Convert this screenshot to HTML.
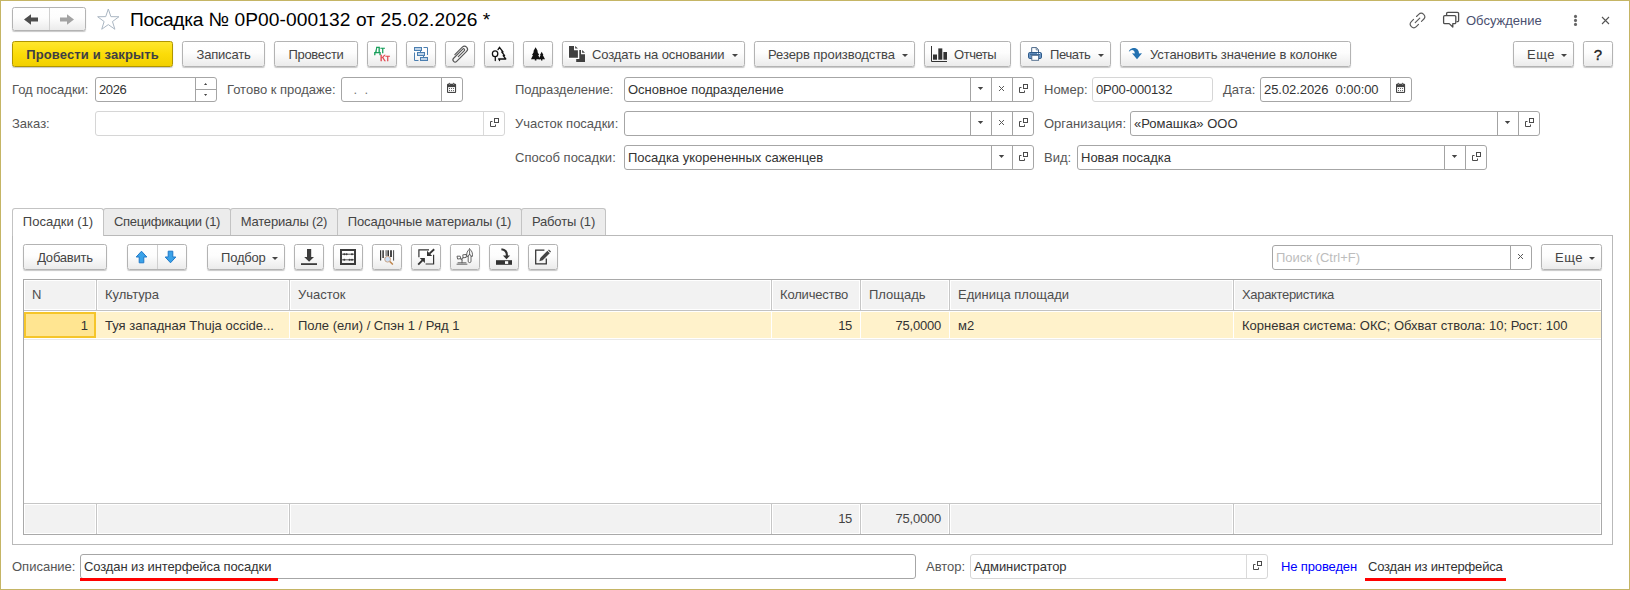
<!DOCTYPE html>
<html lang="ru">
<head>
<meta charset="utf-8">
<title>Посадка № 0P00-000132 от 25.02.2026 *</title>
<style>
*{box-sizing:border-box;margin:0;padding:0}
html,body{width:1630px;height:590px;overflow:hidden;background:#fff}
body{font-family:"Liberation Sans",sans-serif;font-size:13px;color:#333;position:relative}
#win{position:absolute;left:0;top:0;width:1630px;height:590px;background:#fff}
#frame{position:absolute;left:0;top:0;width:1630px;height:590px;border:1px solid #c5b565;z-index:50;pointer-events:none}
.a{position:absolute;white-space:nowrap}
.btn{position:absolute;height:26px;border:1px solid #b3b3b3;border-radius:2.5px;background:linear-gradient(#ffffff 0%,#fdfdfd 45%,#ebebeb 100%);box-shadow:0 1px 1px rgba(0,0,0,.22);color:#444;font-size:13px;line-height:24px;padding-top:1px;text-align:center;white-space:nowrap}
.btn.y{background:linear-gradient(#ffe72e 0%,#fbdc09 50%,#f2d000 100%);border-color:#b09600;font-weight:bold;color:#3e3e44}
.lbl{position:absolute;font-size:13px;line-height:24px;height:24px;color:#555;white-space:nowrap}
.inp{position:absolute;height:25px;border:1px solid #a6a6a6;border-radius:3px;background:#fff;font-size:13px;line-height:23px;color:#333;white-space:nowrap;overflow:hidden;padding-left:3px}
.inp.ro{border-color:#d6d6d6}
.ib{position:absolute;top:0;bottom:0;width:21px;border-left:1px solid #a3a3a3}
.ro .ib{border-left-color:#dadada}
.ib svg{position:absolute;left:0;top:0}
.tab{position:absolute;top:208px;height:27px;border:1px solid #c3c3c3;border-bottom:none;border-radius:3px 3px 0 0;background:#ececec;font-size:13px;line-height:25px;color:#444;text-align:center;white-space:nowrap}
.tab.on{background:#fff;height:28px;z-index:2}
.hc{position:absolute;top:0;height:30px;font-size:13px;line-height:30px;color:#4d4d4d;padding-left:8px;background:#f2f2f2;box-shadow:inset 0 0 0 1px #fff;border-right:1px solid #c6c6c6;white-space:nowrap}
.rc{position:absolute;top:0;height:26px;font-size:13px;line-height:26px;padding-top:1px;color:#333;padding-left:8px;border-right:1px solid #fff;white-space:nowrap;overflow:hidden}
.rc.sel{border:2px solid #f5c52a;background:#ffe591;line-height:22px;padding-top:1px;padding-right:6px}
.fc{position:absolute;top:0;height:30px;font-size:13px;line-height:30px;color:#444;background:#f2f2f2;box-shadow:inset 0 0 0 1px #fff;border-right:1px solid #c6c6c6;white-space:nowrap}
.r{text-align:right;padding-right:8px;padding-left:0}
svg{display:block}
</style>
</head>
<body>
<div id="win">

<!-- header -->
<div id="hdr">
<div class="btn" style="left:12px;top:7px;width:74px;height:24px"></div>
<div class="a" style="left:49px;top:8px;width:1px;height:22px;background:#d0d0d0"></div>



<div class="a" style="left:130px;top:8px;font-size:19.2px;line-height:24px;color:#000"><span style="letter-spacing:-0.35px">Посадка</span><span style="letter-spacing:0.08px"> № 0P00-000132 от 25.02.2026 *</span></div>


<div class="a" style="left:1466px;top:9px;font-size:13px;line-height:24px;color:#4a5070">Обсуждение</div>


</div>

<!-- toolbar -->
<div id="tb">
<div class="btn y" style="left:12px;top:41px;width:161px;letter-spacing:0.13px">Провести и закрыть</div>
<div class="btn" style="left:182px;top:41px;width:83px;letter-spacing:-0.2px">Записать</div>
<div class="btn" style="left:274px;top:41px;width:84px;letter-spacing:-0.3px">Провести</div>
<div class="btn" style="left:367px;top:41px;width:30px"></div>
<div class="btn" style="left:406px;top:41px;width:30px"></div>
<div class="btn" style="left:445px;top:41px;width:30px"></div>
<div class="btn" style="left:484px;top:41px;width:30px"></div>
<div class="btn" style="left:523px;top:41px;width:30px"></div>
<div class="btn" style="left:562px;top:41px;width:183px;text-align:left;padding-left:29px;letter-spacing:-0.12px">Создать на основании</div>
<div class="btn" style="left:754px;top:41px;width:161px;text-align:left;padding-left:13px;letter-spacing:-0.07px">Резерв производства</div>
<div class="btn" style="left:924px;top:41px;width:87px;text-align:left;padding-left:29px;letter-spacing:-0.45px">Отчеты</div>
<div class="btn" style="left:1020px;top:41px;width:91px;text-align:left;padding-left:29px;letter-spacing:-0.35px">Печать</div>
<div class="btn" style="left:1120px;top:41px;width:231px;text-align:left;padding-left:29px;letter-spacing:-0.09px">Установить значение в колонке</div>
<div class="btn" style="left:1513px;top:41px;width:61px;text-align:left;padding-left:13px;letter-spacing:0.5px">Еще</div>
<div class="btn" style="left:1583px;top:41px;width:30px;font-size:15px;color:#222;-webkit-text-stroke:0.35px #222">?</div>
</div>

<!-- fields -->
<div id="fld">
<div class="lbl" style="left:12px;top:78px">Год посадки:</div>
<div class="inp" style="left:95px;top:77px;width:122px;letter-spacing:-0.4px">2026<div class="ib" style="left:99px"><div class="a" style="left:0;top:11px;width:20px;height:1px;background:#a3a3a3"></div><svg width="20" height="23" viewBox="0 0 20 23"><path d="M8,7.1 H11.2 L9.6,5 Z M8,16.1 H11.2 L9.6,18.1 Z" fill="#444"/></svg></div></div>
<div class="lbl" style="left:227px;top:78px">Готово к продаже:</div>
<div class="inp" style="left:341px;top:77px;width:122px;padding-left:8px;color:#777">&nbsp;.&nbsp;&nbsp;.<div class="ib" style="left:99px"><svg width="20" height="23" viewBox="0 0 20 23"><rect x="5" y="5.8" width="9.1" height="9.1" rx="1" fill="#444"/><rect x="6.1" y="9.1" width="6.9" height="4.8" fill="#fff"/><path d="M7.4,5.5 V7 M11.6,5.5 V7" stroke="#444" stroke-width="1.5" stroke-linecap="round"/><path d="M7.4,5.7 V6.6 M11.6,5.7 V6.6" stroke="#fff" stroke-width="0.6"/><g fill="#444"><circle cx="7.5" cy="10.5" r="0.55"/><circle cx="9.55" cy="10.5" r="0.55"/><circle cx="11.6" cy="10.5" r="0.55"/><circle cx="7.5" cy="12.6" r="0.55"/><circle cx="9.55" cy="12.6" r="0.55"/><circle cx="11.6" cy="12.6" r="0.55"/></g></svg></div></div>
<div class="lbl" style="left:515px;top:78px">Подразделение:</div>
<div class="inp" style="left:624px;top:77px;width:410px">Основное подразделение<div class="ib" style="left:345px"><svg width="20" height="23" viewBox="0 0 20 23"><path d="M6.8,9 h5.4 l-2.7,3.1 z" fill="#444"/></svg></div><div class="ib" style="left:366px"><svg width="20" height="23" viewBox="0 0 20 23"><path d="M7,8 l5,5 m0,-5 l-5,5" stroke="#5a5a5a" stroke-width="1" fill="none"/></svg></div><div class="ib" style="left:387px"><svg width="20" height="23" viewBox="0 0 20 23" fill="none" stroke="#4a4a4a" stroke-width="1"><rect x="10.5" y="6.5" width="4" height="4"/><path d="M8.5,9.5 H6.5 V14.5 H11.5 V12.5"/></svg></div></div>
<div class="lbl" style="left:1044px;top:78px">Номер:</div>
<div class="inp ro" style="left:1092px;top:77px;width:121px;letter-spacing:-0.17px">0P00-000132</div>
<div class="lbl" style="left:1223px;top:78px">Дата:</div>
<div class="inp" style="left:1260px;top:77px;width:152px;letter-spacing:-0.06px">25.02.2026&nbsp; 0:00:00<div class="ib" style="left:129px"><svg width="20" height="23" viewBox="0 0 20 23"><rect x="5" y="5.8" width="9.1" height="9.1" rx="1" fill="#444"/><rect x="6.1" y="9.1" width="6.9" height="4.8" fill="#fff"/><path d="M7.4,5.5 V7 M11.6,5.5 V7" stroke="#444" stroke-width="1.5" stroke-linecap="round"/><path d="M7.4,5.7 V6.6 M11.6,5.7 V6.6" stroke="#fff" stroke-width="0.6"/><g fill="#444"><circle cx="7.5" cy="10.5" r="0.55"/><circle cx="9.55" cy="10.5" r="0.55"/><circle cx="11.6" cy="10.5" r="0.55"/><circle cx="7.5" cy="12.6" r="0.55"/><circle cx="9.55" cy="12.6" r="0.55"/><circle cx="11.6" cy="12.6" r="0.55"/></g></svg></div></div>

<div class="lbl" style="left:12px;top:112px">Заказ:</div>
<div class="inp ro" style="left:95px;top:111px;width:410px"><div class="ib" style="left:387px"><svg width="20" height="23" viewBox="0 0 20 23" fill="none" stroke="#4a4a4a" stroke-width="1"><rect x="10.5" y="6.5" width="4" height="4"/><path d="M8.5,9.5 H6.5 V14.5 H11.5 V12.5"/></svg></div></div>
<div class="lbl" style="left:515px;top:112px">Участок посадки:</div>
<div class="inp" style="left:624px;top:111px;width:410px"><div class="ib" style="left:345px"><svg width="20" height="23" viewBox="0 0 20 23"><path d="M6.8,9 h5.4 l-2.7,3.1 z" fill="#444"/></svg></div><div class="ib" style="left:366px"><svg width="20" height="23" viewBox="0 0 20 23"><path d="M7,8 l5,5 m0,-5 l-5,5" stroke="#5a5a5a" stroke-width="1" fill="none"/></svg></div><div class="ib" style="left:387px"><svg width="20" height="23" viewBox="0 0 20 23" fill="none" stroke="#4a4a4a" stroke-width="1"><rect x="10.5" y="6.5" width="4" height="4"/><path d="M8.5,9.5 H6.5 V14.5 H11.5 V12.5"/></svg></div></div>
<div class="lbl" style="left:1044px;top:112px">Организация:</div>
<div class="inp" style="left:1130px;top:111px;width:410px">«Ромашка» ООО<div class="ib" style="left:366px"><svg width="20" height="23" viewBox="0 0 20 23"><path d="M6.8,9 h5.4 l-2.7,3.1 z" fill="#444"/></svg></div><div class="ib" style="left:387px"><svg width="20" height="23" viewBox="0 0 20 23" fill="none" stroke="#4a4a4a" stroke-width="1"><rect x="10.5" y="6.5" width="4" height="4"/><path d="M8.5,9.5 H6.5 V14.5 H11.5 V12.5"/></svg></div></div>

<div class="lbl" style="left:515px;top:146px">Способ посадки:</div>
<div class="inp" style="left:624px;top:145px;width:410px">Посадка укорененных саженцев<div class="ib" style="left:366px"><svg width="20" height="23" viewBox="0 0 20 23"><path d="M6.8,9 h5.4 l-2.7,3.1 z" fill="#444"/></svg></div><div class="ib" style="left:387px"><svg width="20" height="23" viewBox="0 0 20 23" fill="none" stroke="#4a4a4a" stroke-width="1"><rect x="10.5" y="6.5" width="4" height="4"/><path d="M8.5,9.5 H6.5 V14.5 H11.5 V12.5"/></svg></div></div>
<div class="lbl" style="left:1044px;top:146px">Вид:</div>
<div class="inp" style="left:1077px;top:145px;width:410px">Новая посадка<div class="ib" style="left:366px"><svg width="20" height="23" viewBox="0 0 20 23"><path d="M6.8,9 h5.4 l-2.7,3.1 z" fill="#444"/></svg></div><div class="ib" style="left:387px"><svg width="20" height="23" viewBox="0 0 20 23" fill="none" stroke="#4a4a4a" stroke-width="1"><rect x="10.5" y="6.5" width="4" height="4"/><path d="M8.5,9.5 H6.5 V14.5 H11.5 V12.5"/></svg></div></div>
</div>

<!-- tabs + panel -->
<div id="tabs">
<div class="tab on" style="left:12px;width:92px">Посадки (1)</div>
<div class="tab" style="left:103px;width:128px;letter-spacing:-0.3px">Спецификации (1)</div>
<div class="tab" style="left:230px;width:108px;letter-spacing:-0.2px">Материалы (2)</div>
<div class="tab" style="left:337px;width:185px;letter-spacing:-0.1px">Посадочные материалы (1)</div>
<div class="tab" style="left:521px;width:85px;letter-spacing:-0.15px">Работы (1)</div>
<div class="a" style="left:12px;top:235px;width:1601px;height:310px;border:1px solid #b9b9b9;background:#fff"></div>

<div class="btn" style="left:23px;top:244px;width:84px;letter-spacing:-0.22px">Добавить</div>
<div class="btn" style="left:127px;top:244px;width:60px"></div>
<div class="a" style="left:157px;top:245px;width:1px;height:24px;background:#cfcfcf"></div>


<div class="btn" style="left:207px;top:244px;width:78px;text-align:left;padding-left:13px;letter-spacing:-0.2px">Подбор</div>
<div class="btn" style="left:294px;top:244px;width:30px"></div>
<div class="btn" style="left:333px;top:244px;width:30px"></div>
<div class="btn" style="left:372px;top:244px;width:30px"></div>
<div class="btn" style="left:411px;top:244px;width:30px"></div>
<div class="btn" style="left:450px;top:244px;width:30px"></div>
<div class="btn" style="left:489px;top:244px;width:30px"></div>
<div class="btn" style="left:528px;top:244px;width:30px"></div>
<div class="inp" style="left:1272px;top:245px;width:260px;color:#bdbdbd">Поиск (Ctrl+F)<div class="ib" style="left:237px"><svg width="20" height="23" viewBox="0 0 20 23"><path d="M7,8 l5,5 m0,-5 l-5,5" stroke="#5a5a5a" stroke-width="1" fill="none"/></svg></div></div>
<div class="btn" style="left:1541px;top:244px;width:61px;text-align:left;padding-left:13px;letter-spacing:0.5px">Еще</div>

<div class="a" id="tbl" style="left:23px;top:279px;width:1579px;height:256px;border:1px solid #a9a9a9;background:#fff;overflow:hidden">
 <div class="a" style="left:0;top:0;width:1577px;height:31px;border-bottom:1px solid #c2c2c2"><div class="hc" style="left:0px;width:73px">N</div><div class="hc" style="left:73px;width:193px">Культура</div><div class="hc" style="left:266px;width:482px">Участок</div><div class="hc" style="left:748px;width:89px;letter-spacing:-0.17px">Количество</div><div class="hc" style="left:837px;width:89px">Площадь</div><div class="hc" style="left:926px;width:284px">Единица площади</div><div class="hc" style="left:1210px;width:367px;border-right:none;letter-spacing:-0.33px">Характеристика</div></div>
 <div class="a" style="left:0;top:32px;width:1577px;height:26px;background:#fff2cb"><div class="rc r sel" style="left:0px;width:72px">1</div><div class="rc" style="left:73px;width:193px">Туя западная Thuja occide...</div><div class="rc" style="left:266px;width:482px">Поле (ели) / Спэн 1 / Ряд 1</div><div class="rc r" style="left:748px;width:89px;letter-spacing:-0.3px">15</div><div class="rc r" style="left:837px;width:89px;letter-spacing:-0.2px">75,0000</div><div class="rc" style="left:926px;width:284px">м2</div><div class="rc" style="left:1210px;width:367px;border-right:none">Корневая система: ОКС; Обхват ствола: 10; Рост: 100</div></div>
 <div class="a" style="left:0;top:59px;width:1577px;height:1px;background:#e9e9e9"></div>
 <div class="a" style="left:0;top:223px;width:1577px;height:31px;border-top:1px solid #c6c6c6"><div class="fc r" style="left:0px;width:73px"></div><div class="fc" style="left:73px;width:193px"></div><div class="fc" style="left:266px;width:482px"></div><div class="fc r" style="left:748px;width:89px;letter-spacing:-0.3px">15</div><div class="fc r" style="left:837px;width:89px;letter-spacing:-0.2px">75,0000</div><div class="fc" style="left:926px;width:284px"></div><div class="fc" style="left:1210px;width:367px;border-right:none"></div></div>
</div>
</div>

<!-- bottom -->
<div id="bot">
<div class="lbl" style="left:12px;top:555px">Описание:</div>
<div class="inp" style="left:80px;top:554px;width:836px;letter-spacing:-0.11px">Создан из интерфейса посадки</div>
<div class="a" style="left:80px;top:578px;width:198px;height:3px;background:#f00"></div>
<div class="lbl" style="left:926px;top:555px">Автор:</div>
<div class="inp ro" style="left:970px;top:554px;width:298px;letter-spacing:-0.1px">Администратор<div class="ib" style="left:275px"><svg width="20" height="23" viewBox="0 0 20 23" fill="none" stroke="#4a4a4a" stroke-width="1"><rect x="10.5" y="6.5" width="4" height="4"/><path d="M8.5,9.5 H6.5 V14.5 H11.5 V12.5"/></svg></div></div>
<div class="lbl" style="left:1281px;top:555px;color:#0000ff;letter-spacing:-0.13px">Не проведен</div>
<div class="lbl" style="left:1368px;top:555px;color:#333;letter-spacing:-0.18px">Создан из интерфейса</div>
<div class="a" style="left:1365px;top:578px;width:141px;height:3px;background:#f00"></div>
</div>

</div>
<svg id="ico" width="1630" height="590" viewBox="0 0 1630 590" style="position:absolute;left:0;top:0;z-index:20;pointer-events:none;will-change:transform">
<!-- header -->
<path d="M24,19.5 L31,14.3 V17.6 H38 V21.4 H31 V24.7 Z" fill="#4d4d4d"/>
<path d="M74,19.5 L67,14.3 V17.6 H60 V21.4 H67 V24.7 Z" fill="#a3a3a3"/>
<path d="M108.30,9.00 L110.89,16.64 L118.95,16.74 L112.48,21.56 L114.88,29.26 L108.30,24.60 L101.72,29.26 L104.12,21.56 L97.65,16.74 L105.71,16.64 Z" fill="#fff" stroke="#aab6c2" stroke-width="1"/>
<g transform="translate(1417.5,20.45) rotate(-45)" fill="none" stroke="#5a5a5a" stroke-width="1.15" stroke-linecap="round"><path d="M2.1,-3.5 H5.2 A3.5,3.5 0 0 1 5.2,3.5 H2.1 M-2.1,-3.5 H-5.2 A3.5,3.5 0 0 0 -5.2,3.5 H-2.1 M-3.2,0 H3.2"/></g>
<g fill="none" stroke="#4d4d4d" stroke-width="1.3" stroke-linejoin="round"><path d="M1446.6,15 V13.6 a1.2,1.2 0 0 1 1.2,-1.2 H1457.4 a1.2,1.2 0 0 1 1.2,1.2 V20.4 a1.2,1.2 0 0 1 -1.2,1.2 H1456.5"/><path d="M1444.8,15.7 H1454.6 a1.2,1.2 0 0 1 1.2,1.2 V22.4 a1.2,1.2 0 0 1 -1.2,1.2 H1452.8 V27 L1449.2,23.6 H1444.8 a1.2,1.2 0 0 1 -1.2,-1.2 V16.9 a1.2,1.2 0 0 1 1.2,-1.2 Z" fill="#fff"/></g>
<circle cx="1575.5" cy="16.4" r="1.55" fill="#666"/><circle cx="1575.5" cy="20.4" r="1.55" fill="#666"/><circle cx="1575.5" cy="24.4" r="1.55" fill="#666"/>
<path d="M1602,17 L1609,24 M1609,17 L1602,24" stroke="#555" stroke-width="1.1"/>
<!-- toolbar -->
<text x="374.2" y="53.2" font-family="Liberation Sans, sans-serif" font-size="9.5" fill="#0d9a52" stroke="#0d9a52" stroke-width="0.35" opacity="0.99">Дт</text>
<text x="380" y="61" font-family="Liberation Sans, sans-serif" font-size="9.5" fill="#e0434c" stroke="#e0434c" stroke-width="0.35" opacity="0.99">Кт</text>
<g fill="#bcd2e8" stroke="#4a7eb0" stroke-width="1"><rect x="414.5" y="47.5" width="7" height="3"/><rect x="417.5" y="52.5" width="7" height="3"/><rect x="420.5" y="57.5" width="7" height="3"/><path d="M420.5,50.5 V52.5 M423.5,55.5 V57.5 M423.5,47.5 H427.5 V55 M414.5,52.5 V60.5 H418.5" fill="none"/></g>
<g transform="translate(459.8,53.9) rotate(-45)" fill="none" stroke="#555" stroke-width="1.15" stroke-linecap="round"><path d="M-4,-3 H6.6 A3,3 0 0 1 6.6,3 H-7.45 A2.15,2.15 0 0 1 -7.45,-1.3 H5.5 A1.1,1.1 0 0 1 5.5,0.9 H-3"/></g>
<g fill="none" stroke="#111" stroke-width="1.3" stroke-linejoin="round" stroke-linecap="round"><path d="M499.5,47.3 L503,52 H501.8 L504.6,55.6 H503.2 L505.8,59 H498.6 M499.5,59 V60.6 M499.5,47.3 L498,49.6"/><ellipse cx="495.1" cy="53.8" rx="2.7" ry="2.9" fill="#fff"/><path d="M495.3,56.8 V60.6"/></g>
<path d="M535.6,47.3 L538,51.5 H537.2 L539.2,55 H538.2 L540.2,59.2 H536.4 V60.4 H534.8 V59.2 H531 L533,55 H532 L534,51.5 H533.2 Z" fill="#111"/>
<path d="M541.7,51.8 L543.4,55 H542.8 L545,59.2 H542.4 V60.4 H541 V59.2 H538.6 L540.6,55 H540 Z" fill="#111"/>
<path d="M576.2,50.1 H581 V54.2 H585 V62 H576.2 Z M582.1,50.1 V52.8 H585 Z" fill="#404040"/>
<path d="M569,46.1 H574 V50.3 H577.9 V57.7 H569 Z" fill="#404040" stroke="#fff" stroke-width="2.8" paint-order="stroke"/><path d="M575.2,46.1 V48.6 H577.9 Z" fill="#404040" stroke="#fff" stroke-width="1.6" paint-order="stroke"/>
<path d="M732,54 h6 l-3,3 z" fill="#444"/><path d="M902,54 h6 l-3,3 z" fill="#444"/>
<path d="M931.5,46 V61.5 H947" fill="none" stroke="#333" stroke-width="1"/><rect x="933" y="54.5" width="4" height="5.2" fill="#333"/><rect x="938.3" y="48.4" width="4" height="11.3" fill="#333"/><rect x="943.4" y="52" width="3.6" height="7.7" fill="#333"/>
<path d="M1031.7,52.4 V47.6 H1036.4 L1038.5,49.7 V52.4" fill="#fff" stroke="#4a6788" stroke-width="1"/><path d="M1036.2,47.6 V49.9 H1038.5" fill="none" stroke="#4a6788" stroke-width="0.8"/><rect x="1028.5" y="52.5" width="13" height="6" rx="1.3" fill="#6b95c4" stroke="#2f5b8a" stroke-width="1"/><path d="M1030,54.3 H1040" stroke="#2f5b8a" stroke-width="0.9"/><rect x="1037" y="53.1" width="1" height="0.9" fill="#fff"/><rect x="1039" y="53.1" width="1" height="0.9" fill="#fff"/><rect x="1031.8" y="55.3" width="6.8" height="5" fill="#fff" stroke="#4a6788" stroke-width="0.9"/>
<path d="M1098,54 h6 l-3,3 z" fill="#444"/>
<path d="M1128.9,52 C1129,49.6 1131.6,48 1134,48 C1137.2,48 1139,50.4 1139,53.5 L1142,53.3 L1137,59.2 L1132,53.3 L1134.8,53.5 C1134.8,51.4 1133.6,50 1132,50 C1130.6,50 1129.6,51 1128.9,52 Z" fill="#2471b0"/>
<path d="M1561,54 h6 l-3,3 z" fill="#444"/>
<!-- table toolbar -->
<path d="M141.5,251.2 L146.8,257 H143.8 V262.8 H139.2 V257 H136.2 Z" fill="#3aa2e8" stroke="#1f78c8" stroke-width="1" stroke-linejoin="round"/>
<path d="M170.5,262.8 L175.8,257 H172.8 V251.2 H168.2 V257 H165.2 Z" fill="#3aa2e8" stroke="#1f78c8" stroke-width="1" stroke-linejoin="round"/>
<path d="M272,257 h6 l-3,3 z" fill="#444"/>
<path d="M307,249 H311.2 V257 H314 L309.1,261.8 L304.2,257 H307 Z" fill="#3c3c3c"/><rect x="301" y="263.2" width="16" height="1.8" fill="#3c3c3c"/>
<rect x="341" y="250" width="14" height="14" fill="none" stroke="#3c3c3c" stroke-width="2"/><path d="M342,254.2 H354 M342,259.8 H354" stroke="#3c3c3c" stroke-width="0.9"/><g fill="#3c3c3c"><circle cx="344.3" cy="254.2" r="1.05"/><circle cx="346.6" cy="254.2" r="1.05"/><circle cx="352" cy="254.2" r="1.05"/><circle cx="344.3" cy="259.8" r="1.05"/><circle cx="349.6" cy="259.8" r="1.05"/><circle cx="352" cy="259.8" r="1.05"/></g>
<g stroke="#333"><path d="M380.6,250.2 V260.6" stroke-width="1.2"/><path d="M383.1,250.2 V258" stroke-width="1.5"/><path d="M386.1,250.2 V256" stroke-width="0.9"/><path d="M388.2,250.2 V256" stroke-width="1.6"/><path d="M391,250.2 V257" stroke-width="1.8"/><path d="M393.6,250.2 V260.6" stroke-width="0.9"/></g>
<path d="M389.8,261.5 L392.4,264" stroke="#c08850" stroke-width="1.7" stroke-linecap="round"/><circle cx="387.6" cy="259.2" r="2.9" fill="#cde0f6" stroke="#c9a486" stroke-width="1"/>
<g fill="none" stroke="#333" stroke-width="1.2"><path d="M429,249.9 H418.9 V257.2 M425.6,264 H433.6 V254.7"/><path d="M434.2,249.2 L429.5,253.6 M418.2,264.6 L422.6,260.2" stroke-width="1.9"/></g><path d="M427,256 V250.8 L432.2,256 Z M424.9,257.9 V263.1 L419.7,257.9 Z" fill="#333"/>
<g fill="none" stroke="#555" stroke-width="0.9" stroke-linecap="round" stroke-linejoin="round"><path d="M457,264.2 H467 M458,262.8 H466 M462,262.8 V258.6 M462,260 L460.4,258.8 M457.4,256.2 H460.2 L460.8,258.6 L458,259 Z M462,258.8 L463.2,257.4 M463.2,254.8 L466.4,254.4 L466.2,257.4 L463.4,257.8 Z"/><path d="M469.6,249 C467.2,250.4 466.4,253.4 466.8,256.4 H472.4 C472.8,253.4 472,250.4 469.6,249 Z M469.6,250.6 V255"/><rect x="468.2" y="254.6" width="2.8" height="8" rx="1.4" fill="#fff"/></g>
<rect x="496" y="260.2" width="16" height="4.6" fill="#333"/><rect x="505" y="261.2" width="3.2" height="2.7" fill="#fff"/><path d="M501.4,249.2 C505.6,249.8 507.2,252.6 506.8,256" fill="none" stroke="#333" stroke-width="2.1"/><path d="M502.9,255.4 H510.1 L506.5,259.3 Z" fill="#333"/>
<path d="M544.4,250 H535.7 V263.9 H546.3 V258.4" fill="none" stroke="#333" stroke-width="1.25"/><path d="M539.3,261.3 L540.3,257.9 L547.4,250.8 L549.8,253.2 L542.7,260.3 Z" fill="#444"/><path d="M548,250.2 L548.9,249.4 L551,251.5 L550.2,252.4 Z" fill="#444"/>
<path d="M1589,257 h6 l-3,3 z" fill="#444"/>
</svg>
<div id="frame"></div>
</body>
</html>
